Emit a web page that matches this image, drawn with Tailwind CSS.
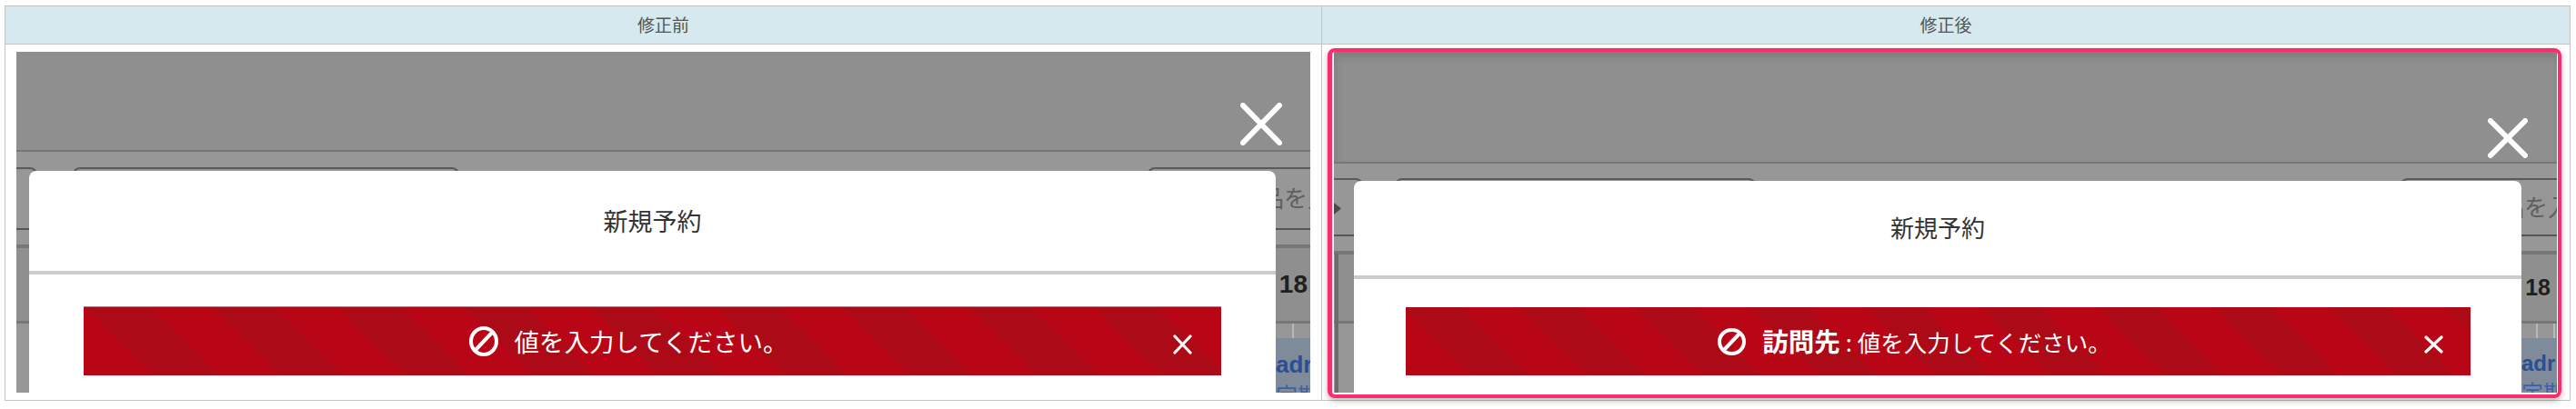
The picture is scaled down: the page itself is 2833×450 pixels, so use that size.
<!DOCTYPE html>
<html lang="ja">
<head>
<meta charset="utf-8">
<script src="https://cdn.jsdelivr.net/npm/@tailwindcss/browser@4"></script>
</head>
<body class="bg-white font-['Noto_Sans_CJK_JP','Noto_Sans',sans-serif]">
<div class="w-[2833px] h-[450px] pt-[6px] pl-[5px] overflow-hidden">
  <div class="w-[2822px] h-[435px] border border-[#c4c4c4] flex flex-col">
    <div class="flex h-[42px] shrink-0 bg-[#d5e9ee] border-b border-[#c4c4c4] text-[19px] text-[#555555]">
      <div class="w-[1448px] flex items-center justify-center border-r border-[#c4c4c4]">修正前</div>
      <div class="flex-1 flex items-center justify-center">修正後</div>
    </div>
    <div class="flex flex-1 min-h-0">
      <!-- before -->
      <div class="w-[1448px] border-r border-[#c4c4c4] pt-[8px] pl-[12px]">
        <div class="relative w-[1423px] h-[375px] overflow-hidden flex flex-col bg-[#979797]">
          <div class="h-[108px] shrink-0 bg-[#8f8f8f]"></div>
          <div class="h-[2px] shrink-0 bg-[#777777]"></div>
          <div class="h-[84px] shrink-0 pt-[17px] flex relative">
            <div class="w-[23px] h-[40px] shrink-0 border-t-2 border-r-2 border-[#5a5a5a] rounded-tr-lg"></div>
            <div class="ml-[39px] w-[425px] h-[40px] shrink-0 border-t-2 border-x-2 border-[#5a5a5a] rounded-t-lg"></div>
            <div class="ml-[757px] flex-1 h-[40px] border-t-2 border-l-2 border-[#5a5a5a] rounded-tl-lg"></div>
            <span class="absolute left-[1368px] top-[33px] text-[26px] leading-[34px] text-[#5f5f5f] whitespace-nowrap">品を入力</span>
          </div>
          <div class="h-[2px] shrink-0 bg-[#555555]"></div>
          <div class="h-[16px] shrink-0"></div>
          <div class="h-[4px] shrink-0 bg-[#777777]"></div>
          <div class="h-[80px] shrink-0 bg-[#8f8f8f] flex justify-end items-center pr-[3px] text-[28px] leading-none font-bold text-[#1f1f1f] font-['Liberation_Sans',sans-serif]">18</div>
          <div class="h-[3px] shrink-0 bg-[#777777]"></div>
          <div class="h-[16px] shrink-0 flex justify-end">
            <div class="w-[2px] bg-[#b8b8b8] mr-[18px]"></div>
          </div>
          <div class="flex-1 flex justify-end">
            <div class="w-[44px] bg-[#7f8a9a] pl-[6px] pt-[14px] whitespace-nowrap overflow-hidden">
              <div class="text-[26px] leading-[30px] font-bold text-[#2a4f93] font-['Liberation_Sans',sans-serif]">adr</div>
              <div class="mt-[4px] text-[24px] leading-[28px] text-[#3a62a8]">定期</div>
            </div>
          </div>
          <!-- close -->
          <svg class="absolute left-[1346px] top-[56px]" width="46" height="47" viewBox="0 0 46 47" fill="none" stroke="#ffffff" stroke-width="6" stroke-linecap="round"><path d="M3 3 L43 44 M43 3 L3 44"/></svg>
          <!-- modal -->
          <div class="absolute left-[14px] top-[131px] w-[1371px] h-[244px] bg-white rounded-t-lg flex flex-col">
            <div class="h-[110px] shrink-0 flex items-center justify-center text-[27px] text-[#333333]">新規予約</div>
            <div class="h-[4px] shrink-0 bg-[#cccccc]"></div>
            <div class="pt-[35px] px-[60px]">
              <div class="h-[76px] flex items-center text-white border-t border-[#d8606a] bg-[repeating-linear-gradient(45deg,#ab0a16_0,#ab0a16_6px,#b90617_6px,#b90617_55px,#ab0a16_55px,#ab0a16_98px)]">
                <div class="flex-1 flex items-center justify-center gap-[18px] pl-[11px]">
                  <svg width="32" height="33" viewBox="0 0 32 33" fill="none" stroke="#ffffff" stroke-width="4"><ellipse cx="16" cy="16.5" rx="14" ry="14.5"/><path d="M25.5 6.5 L6.5 26.5"/></svg>
                  <span class="text-[27.5px] leading-none whitespace-nowrap">値を入力してください。</span>
                </div>
                <svg class="ml-[11px] mr-[32px] mt-[6px]" width="21" height="22" viewBox="0 0 21 22" fill="none" stroke="#ffffff" stroke-width="3.2" stroke-linecap="round"><path d="M2 2 L19 20 M19 2 L2 20"/></svg>
              </div>
            </div>
          </div>
        </div>
      </div>
      <!-- after -->
      <div class="flex-1 pt-[4px] pl-[6px]">
        <div class="w-[1357px] h-[385px] rounded-lg border-4 border-l-[5px] border-[#fb2d6c] bg-white pl-[2px] pr-[1px] pb-[2px] shadow-[0_3px_6px_rgba(0,0,0,0.28)]">
          <div class="relative w-[1345px] h-[375px] overflow-hidden flex flex-col bg-[#979797]">
            <div class="h-[121px] shrink-0 bg-[#8f8f8f] shadow-[inset_2px_6px_8px_rgba(0,0,0,0.12)]"></div>
            <div class="h-[2px] shrink-0 bg-[#777777]"></div>
            <div class="h-[78px] shrink-0 pt-[16px] flex relative">
              <div class="w-[32px] h-[40px] shrink-0 border-t-2 border-r-2 border-[#5a5a5a] rounded-tr-lg"></div>
              <div class="ml-[35px] w-[397px] h-[40px] shrink-0 border-t-2 border-x-2 border-[#5a5a5a] rounded-t-lg"></div>
              <div class="ml-[709px] flex-1 h-[40px] border-t-2 border-l-2 border-[#5a5a5a] rounded-tl-lg"></div>
              <svg class="absolute left-0 top-[43px]" width="8" height="13" viewBox="0 0 8 13" fill="#4a4a4a"><path d="M0 0 L8 6.5 L0 13 Z"/></svg>
              <span class="absolute left-[1283px] top-[30px] text-[26px] leading-[34px] text-[#5f5f5f] whitespace-nowrap">品を入力</span>
            </div>
            <div class="h-[2px] shrink-0 bg-[#555555]"></div>
            <div class="h-[16px] shrink-0"></div>
            <div class="h-[4px] shrink-0 bg-[#777777]"></div>
            <div class="h-[73px] shrink-0 bg-[#8f8f8f] flex justify-end items-center pr-[7px] text-[25px] leading-none font-bold text-[#1f1f1f] font-['Liberation_Sans',sans-serif]">18</div>
            <div class="h-[3px] shrink-0 bg-[#777777]"></div>
            <div class="h-[16px] shrink-0 flex justify-end">
              <div class="w-[2px] bg-[#b8b8b8] mr-[17px]"></div>
              <div class="w-[2px] bg-[#b8b8b8] mr-[2px]"></div>
            </div>
            <div class="flex-1 flex justify-end">
              <div class="w-[45px] bg-[#7f8a9a] pl-[6px] pt-[14px] whitespace-nowrap overflow-hidden">
                <div class="text-[24px] leading-[28px] font-bold text-[#2a4f93] font-['Liberation_Sans',sans-serif]">adr</div>
                <div class="mt-[3px] text-[24px] leading-[28px] text-[#3a62a8]">定期</div>
              </div>
            </div>
            <div class="absolute left-[1px] top-[222px] w-[4px] h-[153px] bg-[#6c6c6c]"></div>
            <svg class="absolute left-[1269px] top-[73px]" width="44" height="44" viewBox="0 0 44 44" fill="none" stroke="#ffffff" stroke-width="6" stroke-linecap="round"><path d="M3 3 L41 41 M41 3 L3 41"/></svg>
            <div class="absolute left-[22px] top-[142px] w-[1284px] h-[233px] bg-white rounded-t-lg flex flex-col">
              <div class="h-[104px] shrink-0 flex items-center justify-center pb-[3px] text-[26px] text-[#333333]">新規予約</div>
              <div class="h-[4px] shrink-0 bg-[#cccccc]"></div>
              <div class="pt-[31px] pl-[57px] pr-[56px]">
                <div class="h-[75px] flex items-center text-white bg-[repeating-linear-gradient(45deg,#ab0a16_0,#ab0a16_6px,#b90617_6px,#b90617_51px,#ab0a16_51px,#ab0a16_90px)]">
                  <div class="flex-1 flex items-center justify-center gap-[18px] pl-[10px]">
                    <svg width="31" height="30" viewBox="0 0 31 30" fill="none" stroke="#ffffff" stroke-width="4"><ellipse cx="15.5" cy="15" rx="13.5" ry="13"/><path d="M24.5 5.5 L6.5 24.5"/></svg>
                    <span class="text-[25.5px] leading-none whitespace-nowrap"><b class="font-bold text-[28.5px] mr-[6px]">訪問先</b>: 値を入力してください。</span>
                  </div>
                  <svg class="ml-[11px] mr-[30px] mt-[6px]" width="21" height="20" viewBox="0 0 21 20" fill="none" stroke="#ffffff" stroke-width="3.2" stroke-linecap="round"><path d="M2 2 L19 18 M19 2 L2 18"/></svg>
                </div>
              </div>
            </div>
          </div>
        </div>
      </div>
    </div>
  </div>
</div>
</body>
</html>
